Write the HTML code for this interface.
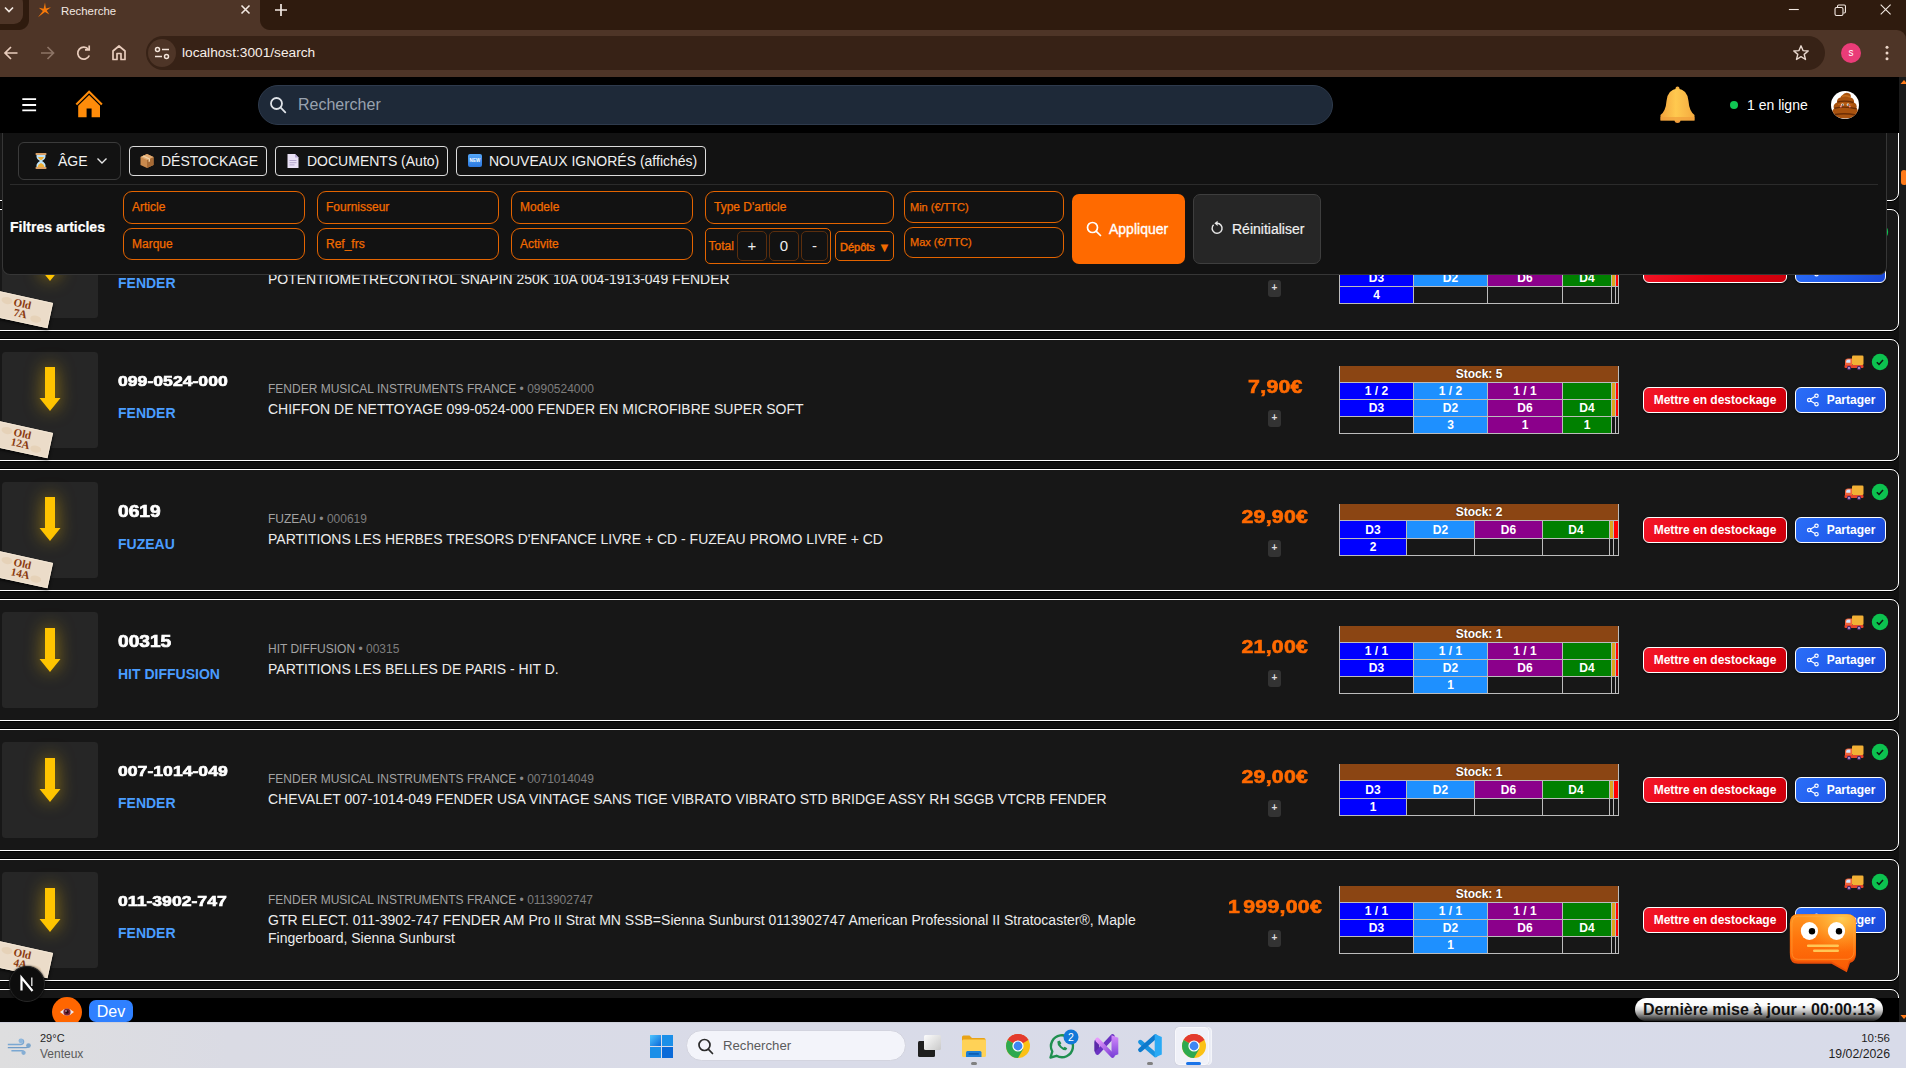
<!DOCTYPE html>
<html lang="fr">
<head>
<meta charset="utf-8">
<title>Recherche</title>
<style>
*{box-sizing:border-box;margin:0;padding:0}
html,body{width:1906px;height:1068px;overflow:hidden;background:#000;font-family:"Liberation Sans",sans-serif;color:#fff}
.abs{position:absolute}
#root{position:relative;width:1906px;height:1068px;overflow:hidden;background:#000}
/* ---------- browser chrome ---------- */
#tabbar{left:0;top:0;width:1906px;height:38px;background:#2f1b0e}
#toolbar{left:0;top:30px;width:1906px;height:47px;background:#4e3527;border-radius:0 9px 0 0}
#tab{left:29px;top:0;width:231px;height:31px;background:#4e3527;border-radius:0 0 0 0}
#tabtxt{left:61px;top:3px;font-size:11.4px;color:#f3e9e2;line-height:16px}
#url{left:146px;top:36px;width:1679px;height:34px;border-radius:17px;background:#372216}
#urltxt{left:182px;top:44px;font-size:13.7px;color:#f7efe9;line-height:18px}
/* ---------- app header ---------- */
#hdr{left:0;top:77px;width:1899px;height:56px;background:#000}
#search{left:258px;top:85px;width:1075px;height:40px;border-radius:20px;background:#1e2938;border:1px solid #2e3a4c}
#searchtxt{left:298px;top:95px;font-size:16px;line-height:20px;color:#99a2af}
/* ---------- list ---------- */
#list{left:0;top:133px;width:1899px;height:865px;background:#101010;overflow:hidden}
.card{position:absolute;left:0;width:1899px;height:122px}
.cb{position:absolute;left:-12px;top:0;width:1911px;height:122px;background:#171717;border:1px solid #fff;border-radius:8px;box-shadow:0 0 0 1px #000}
.th{position:absolute;left:2px;top:13px;width:96px;height:96px;border-radius:3.500px;background:#262626}
.ar{position:absolute;left:20px;top:16px;filter:drop-shadow(0 0 9px rgba(255,196,0,.6))}
.tag{position:absolute;left:-11px;top:86.700px;width:62px;height:26px;background:#ebdcc9;border:1px solid #f3e6d4;transform:rotate(12.400deg);box-shadow:1px 2px 3px rgba(0,0,0,.65);text-align:center;font-family:"Liberation Serif",serif;font-weight:bold;font-size:11px;line-height:9.800px;color:#8a3a0f;padding-top:2.200px;padding-left:2.600px;overflow:hidden}
.tag i{position:absolute;width:11px;height:7px;border-radius:50%;background:#e6d2b8}
.tag .s1{left:9.600px;top:2.700px}.tag .s2{left:42.300px;top:14.800px}
.tag span{position:relative}
.ref{position:absolute;left:118px;top:32px;height:20px;font-weight:bold;font-size:15.500px;line-height:20px;white-space:nowrap}
.ref span{display:inline-block;transform-origin:0 50%;transform:scaleX(1.137);-webkit-text-stroke:.700px #fff}
.ref.sh{font-size:16px}.ref.sh span{transform:scaleX(1.195)}
.br{position:absolute;left:118px;top:65px;font-weight:bold;font-size:14px;line-height:18px;color:#4a9dff;white-space:nowrap}
.su{position:absolute;left:268px;top:42px;font-size:12px;line-height:16px;color:#a3a3a3;white-space:nowrap}
.su b{font-weight:normal;color:#8a8a8a}.su em{font-style:normal;color:#7d7d7d}
.de{position:absolute;left:268px;top:61px;width:900px;font-size:14px;line-height:18px;color:#ececec}
.pr{position:absolute;left:1175px;top:37px;width:200px;text-align:center;font-weight:bold;font-size:19px;line-height:22px;color:#ff6a00;white-space:nowrap}
.pr span{display:inline-block;transform:scaleX(1.120);-webkit-text-stroke:.650px #ff6a00;letter-spacing:.250px}
.pr i{font-style:normal;font-size:9px}
.pl{position:absolute;left:1268px;top:71px;width:13px;height:17px;border-radius:3px;background:#333;color:#ddd;font-size:10px;line-height:15px;text-align:center;font-weight:bold}
.tb{position:absolute;left:1339px;width:280px;background:#bcbcbc}
.tb .sh{position:absolute;left:1px;top:0;width:278px;height:16px;background:#8b4513;text-align:center;font-weight:bold;font-size:12px;line-height:16px;color:#fff;text-shadow:0 0 2px rgba(0,0,0,.6)}
.tb u{position:absolute;height:16px;text-decoration:none;text-align:center;font-weight:bold;font-size:12px;line-height:16px;color:#fff}
.tb .b{background:#0000ff}.tb .l{background:#1e90ff}.tb .p{background:#8b008b}.tb .g{background:#008000}.tb .y{background:#daa520}.tb .r{background:#ff0000}.tb .e{background:#171717}
.bt{position:absolute;top:48px;height:26px;border:1px solid #fff;border-radius:6px;font-weight:bold;font-size:12px;line-height:24px;color:#fff;text-align:center;white-space:nowrap;box-shadow:0 1px 3px rgba(0,0,0,.5)}
.red{left:1643px;width:144px;background:linear-gradient(135deg,#f3182a 0%,#e6000f 50%,#cb000c 100%)}
.blue{left:1795px;width:91px;background:linear-gradient(135deg,#2b6ef8 0%,#1f59ea 60%,#1a47d6 100%);padding-left:21px}
.blue svg{position:absolute;left:10px;top:5px}
.tr{position:absolute;left:1844px;top:16px}
.ck{position:absolute;left:1871px;top:14px}
/* ---------- filter panel ---------- */
#panel{left:2px;top:133px;width:1885px;height:142px;background:#121212;border:1px solid #363636;border-top:none;border-radius:0 0 8px 8px}
.tbtn{position:absolute;height:30px;top:146px;border:1px solid #dcdcdc;border-radius:4px;font-size:14px;line-height:28px;color:#f0f0f0;white-space:nowrap}
.fin{position:absolute;height:33px;border:1.5px solid #e46400;border-radius:9px;font-size:12px;line-height:30px;color:#f26b00;padding-left:8px;white-space:nowrap;-webkit-text-stroke:.25px #f26b00}
.sq{position:absolute;top:231px;height:30px;border:1px solid #5b2e0d;border-radius:5px;text-align:center;color:#eee;font-size:15px;line-height:28px}
</style>
</head>
<body>
<div id="root">

<!-- ================= BROWSER CHROME ================= -->
<div id="tabbar" class="abs"></div>
<div id="toolbar" class="abs"></div>
<div id="tab" class="abs"></div>
<div class="abs" style="left:19px;top:20px;width:10px;height:10px;background:radial-gradient(circle at 0 0,#2f1b0e 9.5px,#4e3527 10.5px)"></div>
<div class="abs" style="left:260px;top:20px;width:10px;height:10px;background:radial-gradient(circle at 100% 0,#2f1b0e 9.5px,#4e3527 10.5px)"></div>
<div class="abs" style="left:-8px;top:-6px;width:31px;height:30px;border-radius:9px;background:#4e3527"></div>
<svg class="abs" style="left:0;top:0" width="300" height="32" viewBox="0 0 300 32" fill="none">
  <path d="M5 7.5 L9 11.5 L13 7.5" stroke="#f3e9e2" stroke-width="1.7"/>
  <path d="M45 2.600 L45.900 8.500 L51 7.300 L46.700 10.400 L49.300 14.600 L45 12 L38 17.200 L42.800 11 L38.800 7.800 L43.600 8.700 Z" fill="#f5790a"/>
  <path d="M241.5 5.5 L249.5 13.5 M249.5 5.5 L241.5 13.5" stroke="#f3e9e2" stroke-width="1.6"/>
  <path d="M281 4 V16 M275 10 H287" stroke="#f3e9e2" stroke-width="1.7"/>
</svg>
<div id="tabtxt" class="abs">Recherche</div>
<svg class="abs" style="left:1771px;top:0" width="135" height="22" viewBox="0 0 136 22" fill="none" stroke="#f3e9e2" stroke-width="1.1">
  <path d="M18 9.5 H28"/>
  <rect x="64.5" y="7.5" width="8" height="8" rx="1.5"/>
  <path d="M67 7 V6.2 Q67 5 68.2 5 H73.8 Q75 5 75 6.2 V11.8 Q75 13 73.8 13 H73"/>
  <path d="M110.500 4.500 L120.500 14.500 M120.500 4.500 L110.500 14.500"/>
</svg>
<svg class="abs" style="left:0;top:36px" width="180" height="34" viewBox="0 0 180 34" fill="none" stroke="#e9cdbd" stroke-width="1.7">
  <path d="M17.500 17 H5.500 M11 11 L5 17 L11 23"/>
  <path d="M41 17 H53 M47.500 11 L53.500 17 L47.500 23" stroke="#8d7466"/>
  <path d="M88.500 13.500 A6 6 0 1 0 89.300 19.500"/><path d="M85 13.800 H89.200 V9.600" />
  <path d="M113 23.500 V15 L119 10 L125 15 V23.500 H121 V17.500 H117 V23.500 Z" stroke-linejoin="round"/>
</svg>
<div id="url" class="abs"></div>
<div class="abs" style="left:148px;top:39px;width:28px;height:28px;border-radius:14px;background:#4e3527"></div>
<svg class="abs" style="left:148px;top:39px" width="28" height="28" viewBox="0 0 28 28" fill="none" stroke="#f3e4da" stroke-width="1.5">
  <circle cx="9.500" cy="10.500" r="2"/><path d="M14 10.500 H21"/>
  <circle cx="18.500" cy="17.500" r="2"/><path d="M7 17.500 H14"/>
</svg>
<div id="urltxt" class="abs">localhost:3001/search</div>
<svg class="abs" style="left:1790px;top:40px" width="116" height="28" viewBox="0 0 116 28" fill="none">
  <path d="M11 5.800 L13 10.600 L18.200 11 L14.200 14.400 L15.500 19.500 L11 16.700 L6.500 19.500 L7.800 14.400 L3.800 11 L9 10.600 Z" stroke="#e9d9cf" stroke-width="1.4" stroke-linejoin="round"/>
  <circle cx="61" cy="13" r="10" fill="#ea3c78"/>
  <circle cx="97" cy="7.300" r="1.500" fill="#ecd7ca"/><circle cx="97" cy="13" r="1.500" fill="#ecd7ca"/><circle cx="97" cy="18.700" r="1.500" fill="#ecd7ca"/>
</svg>
<div class="abs" style="left:1847px;top:47px;width:8px;font-size:10px;line-height:12px;color:#fff;text-align:center">s</div>

<!-- ================= APP HEADER ================= -->
<div id="hdr" class="abs"></div>
<svg class="abs" style="left:18px;top:94px" width="22" height="22" viewBox="0 0 22 22" stroke="#fff" stroke-width="1.800">
  <path d="M4.300 5.200 H18.100 M4.300 11 H18.100 M4.300 16.400 H18.100"/>
</svg>
<svg class="abs" style="left:74px;top:89px" width="30" height="30" viewBox="0 0 30 30">
  <path d="M2.300 15.600 L15.100 2.800 L27.900 15.600" stroke="#ff8c0a" stroke-width="2.100" fill="none" stroke-linejoin="miter"/>
  <path d="M15.100 5.900 L4.200 16.800 V28.200 H12.600 V19.400 H17.600 V28.200 H26 V16.800 Z" fill="#ff8c0a"/>
</svg>
<div id="search" class="abs"></div>
<svg class="abs" style="left:268px;top:95px" width="20" height="20" viewBox="0 0 20 20" fill="none" stroke="#dfe3e8" stroke-width="1.800">
  <circle cx="8.500" cy="8.500" r="5.500"/><path d="M12.700 12.700 L17.300 17.300" stroke-linecap="round"/>
</svg>
<div id="searchtxt" class="abs">Rechercher</div>

<!--BELL-->
<svg class="abs" style="left:1658px;top:84px" width="40" height="40" viewBox="0 0 40 40">
  <defs><linearGradient id="blg" x1="0" y1="0" x2="1" y2="0"><stop offset="0" stop-color="#f3a23c"/><stop offset=".45" stop-color="#ffc94f"/><stop offset="1" stop-color="#f5ab40"/></linearGradient></defs>
  <circle cx="19.500" cy="36" r="3" fill="#ef9a3a"/>
  <circle cx="19.500" cy="4.500" r="2" fill="#f5b042"/>
  <path d="M19.500 4.500 Q29.500 5.500 30.500 17 Q31.200 27 36.500 31 V36.500 H2.500 V31 Q7.800 27 8.500 17 Q9.500 5.500 19.500 4.500 Z" fill="url(#blg)"/>
  <path d="M2.500 33 H36.500 V36.500 H2.500 Z" fill="#f09c3a" opacity=".7"/>
</svg>
<div class="abs" style="left:1730px;top:101px;width:8px;height:8px;border-radius:4px;background:#10c653"></div>
<div class="abs" style="left:1747px;top:96px;font-size:14px;line-height:18px;color:#fff">1 en ligne</div>
<div class="abs" style="left:1831px;top:91px;width:28px;height:28px;border-radius:14px;background:#fff;overflow:hidden">
  <svg width="28" height="28" viewBox="0 0 28 28">
    <path d="M11 4.500 Q14 0.500 18.500 2.500 Q20.500 4 19.500 6.500 Q23.500 7.500 23 11.500 Q26.500 13 25.500 17 Q29 21.500 24.500 25.500 Q14 29.500 4 25.500 Q-1.500 22 3 17.500 Q1.500 13.500 6 11.500 Q5.500 7.500 9.500 6.500 Q9.500 5.300 11 4.500 Z" fill="#a8520f"/>
    <path d="M6.500 11 Q14 9 22.500 11.500 M3.500 17.200 Q14 14.800 25.500 17.800 M4 23.500 Q14 21.800 25 24" stroke="#6b2d05" stroke-width="1.400" fill="none"/>
    <path d="M11 5.500 Q14.500 4 19 6" stroke="#c8701e" stroke-width="1.500" fill="none"/>
    <path d="M7 13.500 Q14 12 21.500 14" stroke="#c26618" stroke-width="1.200" fill="none"/>
    <circle cx="11.500" cy="13.800" r="1.300" fill="#fff"/><circle cx="17" cy="13.800" r="1.300" fill="#fff"/>
    <circle cx="11.700" cy="14" r=".65" fill="#000"/><circle cx="17.200" cy="14" r=".65" fill="#000"/>
    <circle cx="9.800" cy="15.600" r="1" fill="#f08a8a"/><circle cx="18.800" cy="15.600" r="1" fill="#f08a8a"/>
  </svg>
</div>
<!--/BELL-->
<!--LIST-->
<div id="list" class="abs">
<div class="card" style="top:-54px"><div class="cb"></div>
</div>
<div class="card" style="top:76px"><div class="cb"></div>
<div class="th"></div>
<svg class="ar" style="top:16px" width="60" height="70" viewBox="0 0 60 70"><path d="M25 12 H35 V43 H40.500 L30 56 L19.500 43 H25 Z" fill="#ffc400"/></svg>
<div class="tag"><i class="s1"></i><i class="s2"></i><span>Old<br>7A</span></div>
<div class="br" style="top:65px">FENDER</div>
<div class="de">POTENTIOMETRECONTROL SNAPIN 250K 10A 004-1913-049 FENDER</div>
<div class="pl">+</div>
<div class="tb" style="top:27px;height:68px"><div class="sh"></div>
<u class="b" style="left:1px;top:17px;width:73px"></u>
<u class="l" style="left:75px;top:17px;width:73px"></u>
<u class="p" style="left:149px;top:17px;width:74px"></u>
<u class="g" style="left:224px;top:17px;width:48px"></u>
<u class="y" style="left:273px;top:17px;width:3px"></u>
<u class="r" style="left:277px;top:17px;width:2px"></u>
<u class="b" style="left:1px;top:34px;width:73px">D3</u>
<u class="l" style="left:75px;top:34px;width:73px">D2</u>
<u class="p" style="left:149px;top:34px;width:74px">D6</u>
<u class="g" style="left:224px;top:34px;width:48px">D4</u>
<u class="y" style="left:273px;top:34px;width:3px"></u>
<u class="r" style="left:277px;top:34px;width:2px"></u>
<u class="b" style="left:1px;top:51px;width:73px">4</u>
<u class="e" style="left:75px;top:51px;width:73px"></u>
<u class="e" style="left:149px;top:51px;width:74px"></u>
<u class="e" style="left:224px;top:51px;width:48px"></u>
<u class="e" style="left:273px;top:51px;width:3px"></u>
<u class="e" style="left:277px;top:51px;width:2px"></u>
</div>
<div class="bt red"></div>
<div class="bt blue"><svg width="14" height="14" viewBox="0 0 14 14" fill="none" stroke="#fff" stroke-width="1.200"><circle cx="10.500" cy="2.800" r="1.700"/><circle cx="3.200" cy="7" r="1.700"/><circle cx="10.500" cy="11.200" r="1.700"/><path d="M4.700 6.100 L9 3.600 M4.700 7.900 L9 10.400"/></svg></div>
<svg class="tr" width="20" height="16" viewBox="0 0 20 16"><rect x="8" y="0.500" width="11.500" height="9.500" rx="1.200" fill="#f2b035"/><path d="M1 6.500 Q1 3.500 4 3.500 H8 V12 H1 Z" fill="#f2653a"/><path d="M2.200 6.200 Q2.400 4.600 4 4.600 H6.400 V7.800 H2.200 Z" fill="#cfe6ff"/><rect x="0.500" y="10" width="19" height="3" rx="1" fill="#e8452c"/><circle cx="5" cy="13" r="2.200" fill="#4a2a6a"/><circle cx="5" cy="13" r="0.900" fill="#c9b6e6"/><circle cx="15" cy="13" r="2.200" fill="#4a2a6a"/><circle cx="15" cy="13" r="0.900" fill="#c9b6e6"/></svg>
<svg class="ck" width="18" height="18" viewBox="0 0 18 18"><circle cx="9" cy="9" r="8.200" fill="#0cc24f"/><path d="M5.800 9.300 L8 11.400 L12 6.900" stroke="#0b1a10" stroke-width="1.500" fill="none"/></svg>
</div>
<div class="card" style="top:206px"><div class="cb"></div>
<div class="th"></div>
<svg class="ar" style="top:16px" width="60" height="70" viewBox="0 0 60 70"><path d="M25 12 H35 V43 H40.500 L30 56 L19.500 43 H25 Z" fill="#ffc400"/></svg>
<div class="tag"><i class="s1"></i><i class="s2"></i><span>Old<br>12A</span></div>
<div class="ref" style="top:32px"><span>099-0524-000</span></div>
<div class="br" style="top:65px">FENDER</div>
<div class="su">FENDER MUSICAL INSTRUMENTS FRANCE <b>•</b> <em>0990524000</em></div>
<div class="de">CHIFFON DE NETTOYAGE 099-0524-000 FENDER EN MICROFIBRE SUPER SOFT</div>
<div class="pr"><span>7,90€</span></div>
<div class="pl">+</div>
<div class="tb" style="top:27px;height:68px"><div class="sh">Stock: 5</div>
<u class="b" style="left:1px;top:17px;width:73px">1 / 2</u>
<u class="l" style="left:75px;top:17px;width:73px">1 / 2</u>
<u class="p" style="left:149px;top:17px;width:74px">1 / 1</u>
<u class="g" style="left:224px;top:17px;width:48px"></u>
<u class="y" style="left:273px;top:17px;width:3px"></u>
<u class="r" style="left:277px;top:17px;width:2px"></u>
<u class="b" style="left:1px;top:34px;width:73px">D3</u>
<u class="l" style="left:75px;top:34px;width:73px">D2</u>
<u class="p" style="left:149px;top:34px;width:74px">D6</u>
<u class="g" style="left:224px;top:34px;width:48px">D4</u>
<u class="y" style="left:273px;top:34px;width:3px"></u>
<u class="r" style="left:277px;top:34px;width:2px"></u>
<u class="e" style="left:1px;top:51px;width:73px"></u>
<u class="l" style="left:75px;top:51px;width:73px">3</u>
<u class="p" style="left:149px;top:51px;width:74px">1</u>
<u class="g" style="left:224px;top:51px;width:48px">1</u>
<u class="e" style="left:273px;top:51px;width:3px"></u>
<u class="e" style="left:277px;top:51px;width:2px"></u>
</div>
<div class="bt red">Mettre en destockage</div>
<div class="bt blue"><svg width="14" height="14" viewBox="0 0 14 14" fill="none" stroke="#fff" stroke-width="1.200"><circle cx="10.500" cy="2.800" r="1.700"/><circle cx="3.200" cy="7" r="1.700"/><circle cx="10.500" cy="11.200" r="1.700"/><path d="M4.700 6.100 L9 3.600 M4.700 7.900 L9 10.400"/></svg>Partager</div>
<svg class="tr" width="20" height="16" viewBox="0 0 20 16"><rect x="8" y="0.500" width="11.500" height="9.500" rx="1.200" fill="#f2b035"/><path d="M1 6.500 Q1 3.500 4 3.500 H8 V12 H1 Z" fill="#f2653a"/><path d="M2.200 6.200 Q2.400 4.600 4 4.600 H6.400 V7.800 H2.200 Z" fill="#cfe6ff"/><rect x="0.500" y="10" width="19" height="3" rx="1" fill="#e8452c"/><circle cx="5" cy="13" r="2.200" fill="#4a2a6a"/><circle cx="5" cy="13" r="0.900" fill="#c9b6e6"/><circle cx="15" cy="13" r="2.200" fill="#4a2a6a"/><circle cx="15" cy="13" r="0.900" fill="#c9b6e6"/></svg>
<svg class="ck" width="18" height="18" viewBox="0 0 18 18"><circle cx="9" cy="9" r="8.200" fill="#0cc24f"/><path d="M5.800 9.300 L8 11.400 L12 6.900" stroke="#0b1a10" stroke-width="1.500" fill="none"/></svg>
</div>
<div class="card" style="top:336px"><div class="cb"></div>
<div class="th"></div>
<svg class="ar" style="top:16px" width="60" height="70" viewBox="0 0 60 70"><path d="M25 12 H35 V43 H40.500 L30 56 L19.500 43 H25 Z" fill="#ffc400"/></svg>
<div class="tag"><i class="s1"></i><i class="s2"></i><span>Old<br>14A</span></div>
<div class="ref sh" style="top:32.5px"><span>0619</span></div>
<div class="br" style="top:66px">FUZEAU</div>
<div class="su">FUZEAU <b>•</b> <em>000619</em></div>
<div class="de">PARTITIONS LES HERBES TRESORS D'ENFANCE LIVRE + CD - FUZEAU PROMO LIVRE + CD</div>
<div class="pr"><span>29,90€</span></div>
<div class="pl">+</div>
<div class="tb" style="top:35px;height:52px"><div class="sh">Stock: 2</div>
<u class="b" style="left:1px;top:17px;width:66px;height:17px;line-height:18px">D3</u>
<u class="l" style="left:68px;top:17px;width:67px;height:17px;line-height:18px">D2</u>
<u class="p" style="left:136px;top:17px;width:67px;height:17px;line-height:18px">D6</u>
<u class="g" style="left:204px;top:17px;width:66px;height:17px;line-height:18px">D4</u>
<u class="y" style="left:271px;top:17px;width:3px;height:17px;line-height:18px"></u>
<u class="r" style="left:275px;top:17px;width:4px;height:17px;line-height:18px"></u>
<u class="b" style="left:1px;top:35px;width:66px">2</u>
<u class="e" style="left:68px;top:35px;width:67px"></u>
<u class="e" style="left:136px;top:35px;width:67px"></u>
<u class="e" style="left:204px;top:35px;width:66px"></u>
<u class="e" style="left:271px;top:35px;width:3px"></u>
<u class="e" style="left:275px;top:35px;width:4px"></u>
</div>
<div class="bt red">Mettre en destockage</div>
<div class="bt blue"><svg width="14" height="14" viewBox="0 0 14 14" fill="none" stroke="#fff" stroke-width="1.200"><circle cx="10.500" cy="2.800" r="1.700"/><circle cx="3.200" cy="7" r="1.700"/><circle cx="10.500" cy="11.200" r="1.700"/><path d="M4.700 6.100 L9 3.600 M4.700 7.900 L9 10.400"/></svg>Partager</div>
<svg class="tr" width="20" height="16" viewBox="0 0 20 16"><rect x="8" y="0.500" width="11.500" height="9.500" rx="1.200" fill="#f2b035"/><path d="M1 6.500 Q1 3.500 4 3.500 H8 V12 H1 Z" fill="#f2653a"/><path d="M2.200 6.200 Q2.400 4.600 4 4.600 H6.400 V7.800 H2.200 Z" fill="#cfe6ff"/><rect x="0.500" y="10" width="19" height="3" rx="1" fill="#e8452c"/><circle cx="5" cy="13" r="2.200" fill="#4a2a6a"/><circle cx="5" cy="13" r="0.900" fill="#c9b6e6"/><circle cx="15" cy="13" r="2.200" fill="#4a2a6a"/><circle cx="15" cy="13" r="0.900" fill="#c9b6e6"/></svg>
<svg class="ck" width="18" height="18" viewBox="0 0 18 18"><circle cx="9" cy="9" r="8.200" fill="#0cc24f"/><path d="M5.800 9.300 L8 11.400 L12 6.900" stroke="#0b1a10" stroke-width="1.500" fill="none"/></svg>
</div>
<div class="card" style="top:466px"><div class="cb"></div>
<div class="th"></div>
<svg class="ar" style="top:17px" width="60" height="70" viewBox="0 0 60 70"><path d="M25 12 H35 V43 H40.500 L30 56 L19.500 43 H25 Z" fill="#ffc400"/></svg>
<div class="ref sh" style="top:32.5px"><span>00315</span></div>
<div class="br" style="top:66px">HIT DIFFUSION</div>
<div class="su">HIT DIFFUSION <b>•</b> <em>00315</em></div>
<div class="de">PARTITIONS LES BELLES DE PARIS - HIT D.</div>
<div class="pr"><span>21,00€</span></div>
<div class="pl">+</div>
<div class="tb" style="top:27px;height:68px"><div class="sh">Stock: 1</div>
<u class="b" style="left:1px;top:17px;width:73px">1 / 1</u>
<u class="l" style="left:75px;top:17px;width:73px">1 / 1</u>
<u class="p" style="left:149px;top:17px;width:74px">1 / 1</u>
<u class="g" style="left:224px;top:17px;width:48px"></u>
<u class="y" style="left:273px;top:17px;width:3px"></u>
<u class="r" style="left:277px;top:17px;width:2px"></u>
<u class="b" style="left:1px;top:34px;width:73px">D3</u>
<u class="l" style="left:75px;top:34px;width:73px">D2</u>
<u class="p" style="left:149px;top:34px;width:74px">D6</u>
<u class="g" style="left:224px;top:34px;width:48px">D4</u>
<u class="y" style="left:273px;top:34px;width:3px"></u>
<u class="r" style="left:277px;top:34px;width:2px"></u>
<u class="e" style="left:1px;top:51px;width:73px"></u>
<u class="l" style="left:75px;top:51px;width:73px">1</u>
<u class="e" style="left:149px;top:51px;width:74px"></u>
<u class="e" style="left:224px;top:51px;width:48px"></u>
<u class="e" style="left:273px;top:51px;width:3px"></u>
<u class="e" style="left:277px;top:51px;width:2px"></u>
</div>
<div class="bt red">Mettre en destockage</div>
<div class="bt blue"><svg width="14" height="14" viewBox="0 0 14 14" fill="none" stroke="#fff" stroke-width="1.200"><circle cx="10.500" cy="2.800" r="1.700"/><circle cx="3.200" cy="7" r="1.700"/><circle cx="10.500" cy="11.200" r="1.700"/><path d="M4.700 6.100 L9 3.600 M4.700 7.900 L9 10.400"/></svg>Partager</div>
<svg class="tr" width="20" height="16" viewBox="0 0 20 16"><rect x="8" y="0.500" width="11.500" height="9.500" rx="1.200" fill="#f2b035"/><path d="M1 6.500 Q1 3.500 4 3.500 H8 V12 H1 Z" fill="#f2653a"/><path d="M2.200 6.200 Q2.400 4.600 4 4.600 H6.400 V7.800 H2.200 Z" fill="#cfe6ff"/><rect x="0.500" y="10" width="19" height="3" rx="1" fill="#e8452c"/><circle cx="5" cy="13" r="2.200" fill="#4a2a6a"/><circle cx="5" cy="13" r="0.900" fill="#c9b6e6"/><circle cx="15" cy="13" r="2.200" fill="#4a2a6a"/><circle cx="15" cy="13" r="0.900" fill="#c9b6e6"/></svg>
<svg class="ck" width="18" height="18" viewBox="0 0 18 18"><circle cx="9" cy="9" r="8.200" fill="#0cc24f"/><path d="M5.800 9.300 L8 11.400 L12 6.900" stroke="#0b1a10" stroke-width="1.500" fill="none"/></svg>
</div>
<div class="card" style="top:596px"><div class="cb"></div>
<div class="th"></div>
<svg class="ar" style="top:17px" width="60" height="70" viewBox="0 0 60 70"><path d="M25 12 H35 V43 H40.500 L30 56 L19.500 43 H25 Z" fill="#ffc400"/></svg>
<div class="ref" style="top:32px"><span>007-1014-049</span></div>
<div class="br" style="top:65px">FENDER</div>
<div class="su">FENDER MUSICAL INSTRUMENTS FRANCE <b>•</b> <em>0071014049</em></div>
<div class="de">CHEVALET 007-1014-049 FENDER USA VINTAGE SANS TIGE VIBRATO VIBRATO STD BRIDGE ASSY RH SGGB VTCRB FENDER</div>
<div class="pr"><span>29,00€</span></div>
<div class="pl">+</div>
<div class="tb" style="top:35px;height:52px"><div class="sh">Stock: 1</div>
<u class="b" style="left:1px;top:17px;width:66px;height:17px;line-height:18px">D3</u>
<u class="l" style="left:68px;top:17px;width:67px;height:17px;line-height:18px">D2</u>
<u class="p" style="left:136px;top:17px;width:67px;height:17px;line-height:18px">D6</u>
<u class="g" style="left:204px;top:17px;width:66px;height:17px;line-height:18px">D4</u>
<u class="y" style="left:271px;top:17px;width:3px;height:17px;line-height:18px"></u>
<u class="r" style="left:275px;top:17px;width:4px;height:17px;line-height:18px"></u>
<u class="b" style="left:1px;top:35px;width:66px">1</u>
<u class="e" style="left:68px;top:35px;width:67px"></u>
<u class="e" style="left:136px;top:35px;width:67px"></u>
<u class="e" style="left:204px;top:35px;width:66px"></u>
<u class="e" style="left:271px;top:35px;width:3px"></u>
<u class="e" style="left:275px;top:35px;width:4px"></u>
</div>
<div class="bt red">Mettre en destockage</div>
<div class="bt blue"><svg width="14" height="14" viewBox="0 0 14 14" fill="none" stroke="#fff" stroke-width="1.200"><circle cx="10.500" cy="2.800" r="1.700"/><circle cx="3.200" cy="7" r="1.700"/><circle cx="10.500" cy="11.200" r="1.700"/><path d="M4.700 6.100 L9 3.600 M4.700 7.900 L9 10.400"/></svg>Partager</div>
<svg class="tr" width="20" height="16" viewBox="0 0 20 16"><rect x="8" y="0.500" width="11.500" height="9.500" rx="1.200" fill="#f2b035"/><path d="M1 6.500 Q1 3.500 4 3.500 H8 V12 H1 Z" fill="#f2653a"/><path d="M2.200 6.200 Q2.400 4.600 4 4.600 H6.400 V7.800 H2.200 Z" fill="#cfe6ff"/><rect x="0.500" y="10" width="19" height="3" rx="1" fill="#e8452c"/><circle cx="5" cy="13" r="2.200" fill="#4a2a6a"/><circle cx="5" cy="13" r="0.900" fill="#c9b6e6"/><circle cx="15" cy="13" r="2.200" fill="#4a2a6a"/><circle cx="15" cy="13" r="0.900" fill="#c9b6e6"/></svg>
<svg class="ck" width="18" height="18" viewBox="0 0 18 18"><circle cx="9" cy="9" r="8.200" fill="#0cc24f"/><path d="M5.800 9.300 L8 11.400 L12 6.900" stroke="#0b1a10" stroke-width="1.500" fill="none"/></svg>
</div>
<div class="card" style="top:726px"><div class="cb"></div>
<div class="th"></div>
<svg class="ar" style="top:17px" width="60" height="70" viewBox="0 0 60 70"><path d="M25 12 H35 V43 H40.500 L30 56 L19.500 43 H25 Z" fill="#ffc400"/></svg>
<div class="tag"><i class="s1"></i><i class="s2"></i><span>Old<br>4A</span></div>
<div class="ref" style="top:32px"><span>011-3902-747</span></div>
<div class="br" style="top:65px">FENDER</div>
<div class="su" style="top:33px">FENDER MUSICAL INSTRUMENTS FRANCE <b>•</b> <em>0113902747</em></div>
<div class="de" style="top:52px">GTR ELECT. 011-3902-747 FENDER AM Pro II Strat MN SSB=Sienna Sunburst 0113902747 American Professional II Stratocaster®, Maple Fingerboard, Sienna Sunburst</div>
<div class="pr"><span>1<i> </i>999,00€</span></div>
<div class="pl">+</div>
<div class="tb" style="top:27px;height:68px"><div class="sh">Stock: 1</div>
<u class="b" style="left:1px;top:17px;width:73px">1 / 1</u>
<u class="l" style="left:75px;top:17px;width:73px">1 / 1</u>
<u class="p" style="left:149px;top:17px;width:74px">1 / 1</u>
<u class="g" style="left:224px;top:17px;width:48px"></u>
<u class="y" style="left:273px;top:17px;width:3px"></u>
<u class="r" style="left:277px;top:17px;width:2px"></u>
<u class="b" style="left:1px;top:34px;width:73px">D3</u>
<u class="l" style="left:75px;top:34px;width:73px">D2</u>
<u class="p" style="left:149px;top:34px;width:74px">D6</u>
<u class="g" style="left:224px;top:34px;width:48px">D4</u>
<u class="y" style="left:273px;top:34px;width:3px"></u>
<u class="r" style="left:277px;top:34px;width:2px"></u>
<u class="e" style="left:1px;top:51px;width:73px"></u>
<u class="l" style="left:75px;top:51px;width:73px">1</u>
<u class="e" style="left:149px;top:51px;width:74px"></u>
<u class="e" style="left:224px;top:51px;width:48px"></u>
<u class="e" style="left:273px;top:51px;width:3px"></u>
<u class="e" style="left:277px;top:51px;width:2px"></u>
</div>
<div class="bt red">Mettre en destockage</div>
<div class="bt blue"><svg width="14" height="14" viewBox="0 0 14 14" fill="none" stroke="#fff" stroke-width="1.200"><circle cx="10.500" cy="2.800" r="1.700"/><circle cx="3.200" cy="7" r="1.700"/><circle cx="10.500" cy="11.200" r="1.700"/><path d="M4.700 6.100 L9 3.600 M4.700 7.900 L9 10.400"/></svg>Partager</div>
<svg class="tr" width="20" height="16" viewBox="0 0 20 16"><rect x="8" y="0.500" width="11.500" height="9.500" rx="1.200" fill="#f2b035"/><path d="M1 6.500 Q1 3.500 4 3.500 H8 V12 H1 Z" fill="#f2653a"/><path d="M2.200 6.200 Q2.400 4.600 4 4.600 H6.400 V7.800 H2.200 Z" fill="#cfe6ff"/><rect x="0.500" y="10" width="19" height="3" rx="1" fill="#e8452c"/><circle cx="5" cy="13" r="2.200" fill="#4a2a6a"/><circle cx="5" cy="13" r="0.900" fill="#c9b6e6"/><circle cx="15" cy="13" r="2.200" fill="#4a2a6a"/><circle cx="15" cy="13" r="0.900" fill="#c9b6e6"/></svg>
<svg class="ck" width="18" height="18" viewBox="0 0 18 18"><circle cx="9" cy="9" r="8.200" fill="#0cc24f"/><path d="M5.800 9.300 L8 11.400 L12 6.900" stroke="#0b1a10" stroke-width="1.500" fill="none"/></svg>
</div>
<div class="card" style="top:856px"><div class="cb"></div>
</div>
</div>
<!--/LIST-->
<!--PANEL-->
<div id="panel" class="abs"></div>
<div class="abs" style="left:18px;top:142px;width:103px;height:38px;border:1px solid #3b3b3b;border-radius:6px"></div>
<svg class="abs" style="left:33px;top:151px" width="16" height="20" viewBox="0 0 16 20">
  <path d="M3.500 3.500 H12.500 V5.500 Q12.500 8 9 10 Q12.500 12 12.500 14.500 V16.500 H3.500 V14.500 Q3.500 12 7 10 Q3.500 8 3.500 5.500 Z" fill="#bfe3f7"/>
  <path d="M5 6 H11 Q10.500 7.800 8 9.200 Q5.500 7.800 5 6 Z" fill="#f2b035"/>
  <path d="M4.500 16 Q5 13.200 8 12 Q11 13.200 11.500 16 Z" fill="#f2b035"/>
  <rect x="2.500" y="2" width="11" height="2" rx=".8" fill="#d9a066"/><rect x="2.500" y="16" width="11" height="2" rx=".8" fill="#d9a066"/>
</svg>
<div class="abs" style="left:58px;top:151px;font-size:14px;line-height:20px;color:#f2f2f2">ÂGE</div>
<svg class="abs" style="left:95px;top:155px" width="14" height="12" viewBox="0 0 14 12" fill="none" stroke="#e8e8e8" stroke-width="1.400"><path d="M2.500 3.500 L7 8 L11.500 3.500"/></svg>

<div class="tbtn" style="left:129px;width:138px"><span style="position:absolute;left:31px">DÉSTOCKAGE</span></div>
<svg class="abs" style="left:139px;top:153px" width="16" height="16" viewBox="0 0 16 16">
  <path d="M8 1 L14.500 4 V12 L8 15 L1.500 12 V4 Z" fill="#c98a4e"/><path d="M8 7 L14.500 4 V12 L8 15 Z" fill="#a66a35"/><path d="M1.500 4 L8 1 L14.500 4 L8 7 Z" fill="#e2ab72"/><path d="M4.500 2.600 L11 5.600 V8.500 L9.600 9.100 V6.200 L3.200 3.200 Z" fill="#f0d2a8"/>
</svg>
<div class="tbtn" style="left:275px;width:173px"><span style="position:absolute;left:31px">DOCUMENTS (Auto)</span></div>
<svg class="abs" style="left:286px;top:153px" width="14" height="16" viewBox="0 0 14 16">
  <path d="M1.500 1 H9 L12.500 4.500 V15 H1.500 Z" fill="#e9e1f5"/><path d="M9 1 V4.500 H12.500 Z" fill="#b9a9d6"/><path d="M3.500 7.500 H10.500 M3.500 9.700 H10.500 M3.500 11.900 H8.500" stroke="#b3a5cc" stroke-width="1"/>
</svg>
<div class="tbtn" style="left:456px;width:250px"><span style="position:absolute;left:32px">NOUVEAUX IGNORÉS (affichés)</span></div>
<div class="abs" style="left:468px;top:154px;width:14px;height:13px;border-radius:2px;background:linear-gradient(#55a6f7,#2b78e0);font-size:4.500px;line-height:13px;font-weight:bold;color:#fff;text-align:center;letter-spacing:.2px">NEW</div>

<div class="abs" style="left:10px;top:184px;width:1868px;height:1px;background:#2b2b2b"></div>
<div class="abs" style="left:10px;top:218px;font-size:14px;line-height:18px;font-weight:bold;color:#fff;-webkit-text-stroke:.2px #fff">Filtres articles</div>

<div class="fin" style="left:123px;top:191px;width:182px">Article</div>
<div class="fin" style="left:123px;top:228px;width:182px;height:32px">Marque</div>
<div class="fin" style="left:317px;top:191px;width:182px">Fournisseur</div>
<div class="fin" style="left:317px;top:228px;width:182px;height:32px">Ref_frs</div>
<div class="fin" style="left:511px;top:191px;width:182px">Modele</div>
<div class="fin" style="left:511px;top:228px;width:182px;height:32px">Activite</div>
<div class="fin" style="left:705px;top:191px;width:189px">Type D'article</div>
<div class="fin" style="left:705px;top:228px;width:126px;height:36px;border-radius:5px;padding-left:2.500px;line-height:35px">Total</div>
<div class="sq" style="left:737px;width:30px">+</div>
<div class="sq" style="left:769px;width:30px">0</div>
<div class="sq" style="left:801px;width:27px">-</div>
<div class="fin" style="left:835px;top:231px;width:59px;height:30px;border-radius:5px;padding-left:4px;line-height:30px;font-size:11px;-webkit-text-stroke:.45px #f26b00">Dépôts <span style="font-size:13px;-webkit-text-stroke:0;margin-left:0;position:relative;top:.5px">▼</span></div>
<div class="fin" style="left:904px;top:191px;width:160px;height:32px;padding-left:5px;font-size:11px;line-height:30px">Min (€/TTC)</div>
<div class="fin" style="left:904px;top:227px;width:160px;height:31px;padding-left:5px;font-size:11px;line-height:29px">Max (€/TTC)</div>

<div class="abs" style="left:1072px;top:194px;width:113px;height:70px;border-radius:7px;background:#ff6a00"></div>
<svg class="abs" style="left:1085px;top:220px" width="18" height="18" viewBox="0 0 18 18" fill="none" stroke="#fff" stroke-width="1.700"><circle cx="7.500" cy="7.500" r="5"/><path d="M11.300 11.300 L15.500 15.500" stroke-linecap="round"/></svg>
<div class="abs" style="left:1109px;top:220px;font-size:14px;line-height:18px;color:#fff;-webkit-text-stroke:.35px #fff">Appliquer</div>
<div class="abs" style="left:1193px;top:194px;width:128px;height:70px;border-radius:7px;background:#262626;border:1px solid #3e3e3e"></div>
<svg class="abs" style="left:1208px;top:219px" width="18" height="18" viewBox="0 0 18 18" fill="none" stroke="#e6e6e6" stroke-width="1.500"><path d="M5.600 5.700 A5 5 0 1 0 9 4.300" /><path d="M9.600 1.700 L6.400 4.300 L9.600 6.900 Z" fill="#e6e6e6" stroke="none"/></svg>
<div class="abs" style="left:1232px;top:220px;font-size:14px;line-height:18px;color:#f0f0f0;-webkit-text-stroke:.2px #f0f0f0">Réinitialiser</div>
<!--/PANEL-->
<!--BOTTOM-->
<!-- scrollbar -->
<div class="abs" style="left:1899px;top:77px;width:7px;height:945px;background:#1a1a1a"></div>
<div class="abs" style="left:1901px;top:170px;width:6px;height:15px;border-radius:3px;background:#ff7a18"></div>
<svg class="abs" style="left:1899px;top:78px" width="7" height="8" viewBox="0 0 7 8"><path d="M1.500 6 L5 2 L8.500 6 Z" fill="#ff7a18"/></svg>
<svg class="abs" style="left:1899px;top:1013px" width="7" height="8" viewBox="0 0 7 8"><path d="M1.500 2 L5 6 L8.500 2 Z" fill="#ff7a18"/></svg>

<!-- chatbot -->
<svg class="abs" style="left:1784px;top:908px" width="80" height="70" viewBox="0 0 80 70">
  <defs><linearGradient id="cbg" x1="0" y1="0" x2="0" y2="1"><stop offset="0" stop-color="#ff9420"/><stop offset=".45" stop-color="#ff740c"/><stop offset="1" stop-color="#fa5a04"/></linearGradient>
  <radialGradient id="cbh" cx=".78" cy=".08" r=".6"><stop offset="0" stop-color="#ffd257" stop-opacity=".9"/><stop offset="1" stop-color="#ffb030" stop-opacity="0"/></radialGradient></defs>
  <path d="M14 6.300 H63 Q72 6.300 72 15.300 V46 Q72 53 66 55 L62.800 64.200 L47.500 55.700 H14 Q5.900 55.700 5.900 47 V15.300 Q5.900 6.300 14 6.300 Z" fill="#e84e08"/>
  <path d="M14 6.300 H63 Q72 6.300 72 15.300 V44 Q72 51.500 65 53 L62.300 62 L47.500 53.500 H14 Q5.900 53.500 5.900 45 V15.300 Q5.900 6.300 14 6.300 Z" fill="url(#cbg)"/>
  <path d="M14 6.300 H63 Q72 6.300 72 15.300 V44 Q72 51.500 65 53 L62.300 62 L47.500 53.500 H14 Q5.900 53.500 5.900 45 V15.300 Q5.900 6.300 14 6.300 Z" fill="url(#cbh)"/>
  <path d="M14.500 8.300 H62.500 Q70 8.300 70 15.800 V43.500 Q70 50 64 51.300 H14.500 Q7.900 51.300 7.900 44.500 V15.800 Q7.900 8.300 14.500 8.300 Z" fill="none" stroke="#ffb24a" stroke-opacity=".55" stroke-width=".9"/>
  <ellipse cx="25.400" cy="23" rx="8.600" ry="8.900" fill="#fff"/><ellipse cx="52.500" cy="23" rx="8.600" ry="8.900" fill="#fff"/>
  <circle cx="28" cy="23.200" r="3.200" fill="#000"/><circle cx="55" cy="23.200" r="3.200" fill="#000"/>
  <path d="M24.200 37.800 H53.700 M30.300 42.800 H53.700" stroke="#ffc756" stroke-width="2.600" stroke-linecap="round"/>
</svg>

<!-- bottom bar -->
<div class="abs" style="left:0;top:998px;width:1899px;height:24px;background:#000"></div>
<div class="abs" style="left:1635px;top:998px;width:248px;height:23px;border-radius:11.500px;background:linear-gradient(#ffffff 0%,#fbfbfb 32%,#d2d2d2 52%,#8e8e8e 72%,#3c3c3c 92%,#1c1c1c 100%);font-weight:bold;font-size:16px;line-height:24px;color:#111;text-align:center;white-space:nowrap">Dernière mise à jour : 00:00:13</div>
<div class="abs" style="left:9px;top:966px;width:36px;height:36px;border-radius:18px;background:#0d0d0d;border:1.500px solid #262626;box-shadow:0 0 2px #000"></div>
<svg class="abs" style="left:9px;top:966px" width="36" height="36" viewBox="0 0 36 36" fill="none"><path d="M12.500 24.500 V11.500 L23.500 25" stroke="#fff" stroke-width="2.200"/><path d="M22.800 11.500 V20" stroke="#e0e0e0" stroke-width="1.400"/></svg>
<div class="abs" style="left:0;top:1022px;width:1906px;height:46px;background:linear-gradient(90deg,#dededf 0%,#dadbe4 12%,#d9dbe8 40%,#d8dbe9 100%);border-top:1px solid #cfd1dc"></div>
<div class="abs" style="left:0;top:990px;width:200px;height:32px;overflow:hidden">
  <div class="abs" style="left:52px;top:7px;width:30px;height:30px;border-radius:15px;background:#ff6600"></div>
  <svg class="abs" style="left:59px;top:16px" width="16" height="12" viewBox="0 0 16 12"><path d="M1 6 Q8 -1 15 6 Q8 13 1 6 Z" fill="#f1e6e6"/><circle cx="8" cy="6" r="3.600" fill="#7a2438"/><circle cx="8" cy="6" r="1.700" fill="#2a0c14"/><circle cx="7" cy="5" r=".8" fill="#e6c9cf"/></svg>
  <div class="abs" style="left:89px;top:10px;width:44px;height:22px;border-radius:7px;background:#2f80ff;color:#fff;font-size:16px;line-height:23px;text-align:center">Dev</div>
</div>

<!-- taskbar content -->
<svg class="abs" style="left:5px;top:1035px" width="29" height="21.600" viewBox="0 0 32 24" fill="none">
  <path d="M3 10.500 H17 Q20.500 10.500 20.500 7.500 Q20.500 5 18 5" stroke="#7aa7d2" stroke-width="1.600"/><circle cx="17.500" cy="6.500" r="2.600" fill="#8fb7dd"/>
  <path d="M3 14 H23 Q27 14 27 11.200" stroke="#6f9cc8" stroke-width="1.600"/><circle cx="26" cy="11.800" r="2.600" fill="#7da6cc"/>
  <path d="M7 17.500 H18.500 Q21.500 17.500 21.500 19.500" stroke="#7aa7d2" stroke-width="1.600"/><circle cx="20.500" cy="19.800" r="2.400" fill="#86aed4"/>
</svg>
<div class="abs" style="left:40px;top:1031px;font-size:11px;line-height:15px;color:#1f1f1f">29°C</div>
<div class="abs" style="left:40px;top:1047px;font-size:12px;line-height:15px;color:#5a5a5a">Venteux</div>
<div class="abs" style="left:1700px;top:1031px;width:190px;text-align:right;font-size:11.500px;line-height:15px;color:#1f1f1f">10:56</div>
<div class="abs" style="left:1700px;top:1047px;width:190px;text-align:right;font-size:12.300px;line-height:15px;color:#1f1f1f">19/02/2026</div>

<svg class="abs" style="left:649px;top:1034px" width="26" height="26" viewBox="0 0 26 26">
  <defs><linearGradient id="wg" x1="0" y1="0" x2="1" y2="1"><stop offset="0" stop-color="#4fc6ff"/><stop offset="1" stop-color="#0a68d8"/></linearGradient></defs>
  <rect x="1" y="1" width="11" height="11" fill="url(#wg)"/><rect x="13" y="1" width="11" height="11" fill="#1b8fe8"/><rect x="1" y="13" width="11" height="11" fill="#1b8fe8"/><rect x="13" y="13" width="11" height="11" fill="#0a6ad8"/>
</svg>
<div class="abs" style="left:686px;top:1030px;width:220px;height:31px;border-radius:15.500px;background:#f3f4fa;border:1px solid #d3d4df"></div>
<svg class="abs" style="left:696px;top:1037px" width="20" height="20" viewBox="0 0 20 20" fill="none" stroke="#2b2b2b" stroke-width="1.700"><circle cx="8.500" cy="8" r="5.500"/><path d="M12.500 12.300 L16.500 16.500" stroke-linecap="round"/></svg>
<div class="abs" style="left:723px;top:1037px;font-size:13.200px;line-height:18px;color:#5b5b5b">Rechercher</div>
<!-- task view -->
<div class="abs" style="left:918px;top:1041px;width:17px;height:16px;background:#1f1f1f;border-radius:1.500px"></div>
<div class="abs" style="left:924px;top:1035px;width:17px;height:15px;background:linear-gradient(135deg,#fdfdfd,#c9c9c9);border-radius:1.500px"></div>
<!-- explorer -->
<svg class="abs" style="left:960px;top:1034px" width="28" height="26" viewBox="0 0 28 26">
  <path d="M2 3 Q2 1.500 3.500 1.500 H9.500 L12 4 H24 Q25.500 4 25.500 5.500 V8 H2 Z" fill="#e8a317"/>
  <rect x="2" y="5.500" width="24" height="17.500" rx="1.500" fill="#ffd257"/>
  <path d="M6 23 V18.500 Q6 17 7.500 17 H20 Q21.500 17 21.500 18.500 V23 Z" fill="#1e7fd6"/><rect x="8.500" y="19" width="10.500" height="1.800" rx=".9" fill="#0d5db0"/>
</svg>
<div class="abs" style="left:971px;top:1062px;width:6px;height:2.500px;border-radius:1.500px;background:#808080"></div>
<!-- chrome x2 -->
<svg class="abs" style="left:1005px;top:1033px" width="26" height="26" viewBox="0 0 26 26"><g id="chr">
  <circle cx="13" cy="13" r="12" fill="#fbc116"/>
  <path d="M13 13 L2.610 7 A12 12 0 0 1 23.390 7 Z" fill="#e33b2e"/>
  <path d="M13 13 L2.610 7 A12 12 0 0 0 13 25 L18.200 16 Z" fill="#2da94f"/>
  <path d="M13 7 H23.390 A12 12 0 0 0 2.610 7 Z" fill="#e33b2e"/>
  <circle cx="13" cy="13" r="5.600" fill="#fff"/><circle cx="13" cy="13" r="4.400" fill="#3f86f4"/></g>
</svg>
<!-- whatsapp -->
<svg class="abs" style="left:1046px;top:1028px" width="36" height="34" viewBox="0 0 36 34" fill="none">
  <path d="M4.500 29.500 L6.300 23.500 A11 11 0 1 1 10.500 27.800 Z" stroke="#1f8f4f" stroke-width="2.400" stroke-linejoin="round"/>
  <path d="M11.300 13.500 Q11 16.500 14 19.500 Q17 22.600 20 22.300 L21.300 20.300 L18.700 18.700 L17.500 19.800 Q15.500 18.800 14.300 16.500 L15.400 15.300 L13.600 12.500 Z" fill="#1f8f4f"/>
  <circle cx="25" cy="9" r="7.500" fill="#1278d8"/>
</svg>
<div class="abs" style="left:1064px;top:1030px;width:14px;text-align:center;font-size:10.500px;line-height:14px;color:#fff">2</div>
<!-- visual studio -->
<svg class="abs" style="left:1093px;top:1033px" width="27" height="26" viewBox="0 0 27 26">
  <defs><linearGradient id="vsg" x1="0" y1="0" x2="0" y2="1"><stop offset="0" stop-color="#d58cfb"/><stop offset="1" stop-color="#7a41d8"/></linearGradient>
  <linearGradient id="vsg2" x1="0" y1="0" x2="1" y2="1"><stop offset="0" stop-color="#e79afc"/><stop offset="1" stop-color="#7d3fd6"/></linearGradient></defs>
  <rect x="1.300" y="6.500" width="5" height="13.300" rx="2.400" fill="#5b2aa8"/>
  <path d="M4.500 19.500 L19.500 3.500" stroke="#6a33c2" stroke-width="4.600" stroke-linecap="round"/>
  <path d="M4.500 7 L19.500 22.500" stroke="url(#vsg2)" stroke-width="4.600" stroke-linecap="round"/>
  <path d="M18.500 2.300 L25.300 4.800 V21.200 L18.500 23.700 Z" fill="url(#vsg)"/>
</svg>
<!-- vscode -->
<svg class="abs" style="left:1137px;top:1033px" width="26" height="26" viewBox="0 0 26 26">
  <path d="M3.300 9 L18.500 22" stroke="#1a93e0" stroke-width="4.400" stroke-linecap="round"/>
  <path d="M18.500 3.500 L3.300 16.800" stroke="#0e79cc" stroke-width="4.400" stroke-linecap="round"/>
  <path d="M17.700 0.900 L24.800 4 V21.500 L17.700 24.500 Z" fill="#2aaaf5"/>
</svg>
<div class="abs" style="left:1147px;top:1062px;width:6px;height:2.500px;border-radius:1.500px;background:#808080"></div>
<div class="abs" style="left:1178px;top:1027px;width:34px;height:38px;border-radius:4px;background:#eceef6;border:1px solid #f4f5fa"></div>
<div class="abs" style="left:1175px;top:1027px;width:34px;height:38px;border-radius:4px;background:#f0f1f8;border:1px solid #f8f8fc;box-shadow:0 0 1px rgba(0,0,0,.15)"></div>
<svg class="abs" style="left:1181px;top:1033px" width="26" height="26" viewBox="0 0 26 26"><use href="#chr"/></svg>
<div class="abs" style="left:1186px;top:1062px;width:15px;height:3px;border-radius:1.500px;background:#1a73e8"></div>
<!--/BOTTOM-->
</div>
</body>
</html>
